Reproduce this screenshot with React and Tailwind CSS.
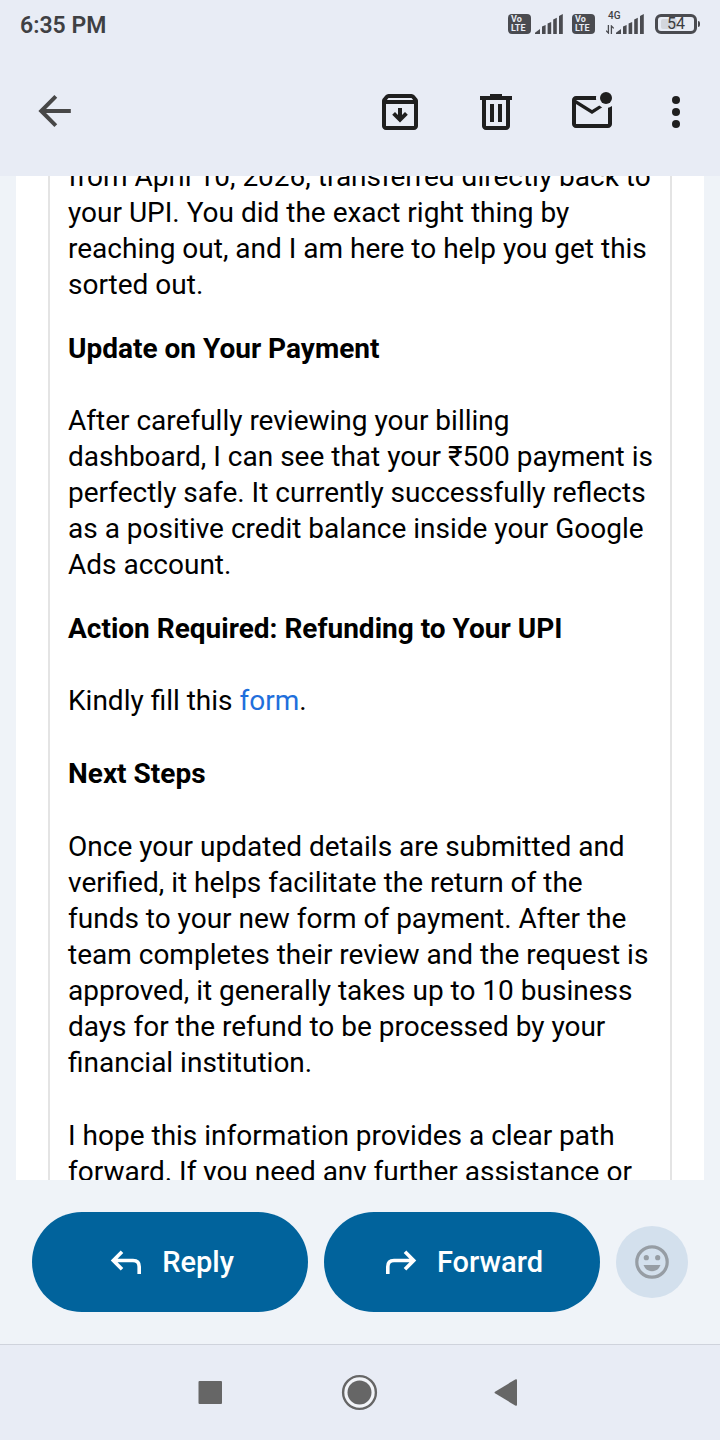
import React from 'react';

function VolteBadge() {
  return (
    <div className="flex h-5 w-[23px] flex-col justify-center rounded-[4px] bg-[#4a4b50] pl-[3px] text-[9px] leading-[9px] font-bold text-[#e8ecf5]">
      <span>Vo</span>
      <span>LTE</span>
    </div>
  );
}

function SignalBars() {
  return (
    <svg width="28" height="20" viewBox="0 0 28 20" fill="#4a4b50" aria-hidden="true">
      <path d="M0 20v-1.2L5 15v5z" />
      <path d="M7 20v-7.5l3.6-1.5v9z" />
      <path d="M12.6 20V9.5L16.2 8v12z" />
      <path d="M18.2 20V5.5l3.6-1.7V20z" />
      <path d="M24 20V2l3.8-2v20z" />
    </svg>
  );
}

function DataArrows() {
  return (
    <svg width="8" height="9" viewBox="0 0 8 9" fill="none" stroke="#4a4b50" strokeWidth="1.3" aria-hidden="true">
      <path d="M2.4 0v8L0 5.6M5.4 9V1l2.4 2.4" />
    </svg>
  );
}

function Battery() {
  return (
    <div className="flex items-center gap-px">
      <div className="relative flex h-5 w-[42px] items-center justify-center rounded-[6px] border-[3px] border-[#4a4b50]">
        <div className="absolute inset-y-[2px] left-[3px] w-4 rounded-[2px] bg-[#d3d6dd]" />
        <span className="relative text-base leading-4 text-[#3c3d41]">54</span>
      </div>
      <div className="h-[6px] w-[2px] rounded-r bg-[#4a4b50]" />
    </div>
  );
}

function StatusBar() {
  return (
    <div className="flex h-12 items-center justify-between px-5">
      <span className="pt-1 text-[23px] leading-7 font-semibold text-[#3f4043]">6:35 PM</span>
      <div className="flex items-center">
        <VolteBadge />
        <div className="ml-1">
          <SignalBars />
        </div>
        <div className="ml-[9px]">
          <VolteBadge />
        </div>
        <div className="relative ml-[11px] flex items-end gap-[2px]">
          <span className="absolute -top-[3px] left-[2px] text-[10px] leading-[10px] font-medium text-[#3f4043]">4G</span>
          <DataArrows />
          <SignalBars />
        </div>
        <div className="ml-[11px]">
          <Battery />
        </div>
      </div>
    </div>
  );
}

function IconButton({ label, children }) {
  return (
    <button aria-label={label} className="flex size-12 items-center justify-center">
      <svg viewBox="0 0 24 24" className="size-12" fill="currentColor">
        {children}
      </svg>
    </button>
  );
}

function Toolbar() {
  return (
    <div className="flex h-32 items-center justify-between pr-5 pl-[30px] text-[#1f1f1f]">
      <div className="text-[#474747]">
        <IconButton label="Back">
          <path d="M8.03 10.5 13.62 4.91 12.2 3.5 4.2 11.5l8 8 1.41-1.41L8.03 12.5H20.4v-2z" />
        </IconButton>
      </div>
      <div className="flex items-center">
        <div className="flex items-center gap-12">
          <IconButton label="Archive">
            <path d="M12 17.3 15.9 13.4 14.5 12 13 13.5V10h-2v3.5L9.5 12l-1.4 1.4z" />
            <path
              fillRule="evenodd"
              d="M5 21q-.83 0-1.41-.59T3 19V6.53q0-.35.11-.68t.34-.6L4.7 3.73q.27-.35.69-.54T6.25 3h11.5q.45 0 .86.19t.69.54l1.25 1.52q.22.27.34.6t.11.68V19q0 .83-.59 1.41T19 21zM5.4 6h13.2l-.85-1H6.25zM5 8v11h14V8z"
            />
          </IconButton>
          <IconButton label="Delete">
            <path
              fillRule="evenodd"
              d="M7 21q-.83 0-1.41-.59T5 19V6H4V4h5V3h6v1h5v2h-1v13q0 .83-.59 1.41T17 21zM17 6H7v13h10zM9 17h2V8H9zm4 0h2V8h-2z"
            />
          </IconButton>
          <IconButton label="Mark as unread">
            <path d="M4 20q-.83 0-1.41-.59T2 18V6q0-.83.59-1.41T4 4h10.1q-.1.5-.1 1t.1 1H4l8 5 3.65-2.28q.33.3.7.53.38.22.8.4L12 13 4 8v10h16V9.9q.57-.13 1.07-.35T22 9v9q0 .83-.59 1.41T20 20z" />
            <circle cx="19" cy="5" r="3" />
          </IconButton>
        </div>
        <div className="ml-9">
          <IconButton label="More options">
            <circle cx="12" cy="6" r="2" />
            <circle cx="12" cy="12" r="2" />
            <circle cx="12" cy="18" r="2" />
          </IconButton>
        </div>
      </div>
    </div>
  );
}

function Message() {
  return (
    <main className="min-h-0 flex-1 overflow-y-auto px-4 [scrollbar-width:none]">
      <div className="bg-white px-8">
        <article className="-mt-[17px] border-x-2 border-[#e4e4e4] pr-[14px] pl-[18px] text-[28px] leading-9 text-black">
          <p className="mb-7">
            from April 10, 2026, transferred directly back to your UPI. You did the exact right thing by
            reaching out, and I am here to help you get this sorted out.
          </p>
          <h2 className="mb-9 font-bold">Update on Your Payment</h2>
          <p className="mb-7">
            After carefully reviewing your billing
            <br />
            dashboard, I can see that your ₹500 payment is perfectly safe. It currently successfully
            reflects as a positive credit balance inside your Google Ads account.
          </p>
          <h2 className="mb-9 font-bold">Action Required: Refunding to Your UPI</h2>
          <p className="mb-[37px]">
            Kindly fill this <a href="#form" className="text-[#1f6fdc]">form</a>.
          </p>
          <h2 className="mb-[37px] font-bold">Next Steps</h2>
          <p className="mb-[37px]">
            Once your updated details are submitted and verified, it helps facilitate the return of
            the funds to your new form of payment. After the team completes their review and the
            request is approved, it generally takes up to 10 business days for the refund to be
            processed by your financial institution.
          </p>
          <p>
            I hope this information provides a clear path forward. If you need any further
            assistance or
          </p>
        </article>
      </div>
    </main>
  );
}

function PillButton({ label, children }) {
  return (
    <button className="flex h-[100px] flex-1 items-center justify-center gap-4 rounded-full bg-[#01639c] text-[29px] leading-9 font-medium text-white">
      <svg viewBox="0 0 40 40" className="size-10" fill="none" stroke="currentColor" strokeWidth="3.6" aria-hidden="true">
        {children}
      </svg>
      {label}
    </button>
  );
}

function ReplyBar() {
  return (
    <div className="flex items-center gap-4 p-8">
      <PillButton label="Reply">
        <path d="M16 9.7 7.3 18.5 16 27.3M7.5 18.5H27q6.2 0 6.2 6.2V32" />
      </PillButton>
      <PillButton label="Forward">
        <path d="M24 9.7 32.7 18.5 24 27.3M32.5 18.5H13q-6.2 0-6.2 6.2V32" />
      </PillButton>
      <button aria-label="Add reaction" className="flex size-[72px] items-center justify-center rounded-full bg-[#d3e0ed] text-[#969da4]">
        <svg viewBox="0 0 40 40" className="size-10" fill="currentColor">
          <circle cx="20" cy="20" r="15.2" fill="none" stroke="currentColor" strokeWidth="3.2" />
          <circle cx="14.3" cy="15.7" r="2.6" />
          <circle cx="25.7" cy="15.7" r="2.6" />
          <path d="M11.5 23h17q-2.4 6.2-8.5 6.2T11.5 23z" />
        </svg>
      </button>
    </div>
  );
}

function NavBar() {
  return (
    <nav className="flex h-24 items-center justify-center gap-[102px] border-t border-[#cfd3dc] bg-[#e8ecf5] text-[#666666]">
      <button aria-label="Recent apps">
        <svg viewBox="0 0 48 48" className="size-12" fill="currentColor">
          <rect x="12.5" y="12" width="23.5" height="23" rx="1" />
        </svg>
      </button>
      <button aria-label="Home">
        <svg viewBox="0 0 48 48" className="size-12" fill="currentColor">
          <circle cx="23.5" cy="23.5" r="16.4" fill="#f2f4f8" stroke="currentColor" strokeWidth="2.4" />
          <circle cx="23.5" cy="23.5" r="12" />
        </svg>
      </button>
      <button aria-label="Back">
        <svg viewBox="0 0 48 48" className="size-12" fill="currentColor">
          <path d="M9 22.7Q8 23.5 9 24.3L29.2 36.5q1.8.8 1.8-.8V11.3q0-1.6-1.8-.8z" />
        </svg>
      </button>
    </nav>
  );
}

export default function App() {
  return (
    <div className="flex h-screen flex-col bg-[#eff3f8] font-['Roboto',sans-serif]">
      <header className="bg-[#e8ecf5]">
        <StatusBar />
        <Toolbar />
      </header>
      <Message />
      <ReplyBar />
      <NavBar />
    </div>
  );
}
